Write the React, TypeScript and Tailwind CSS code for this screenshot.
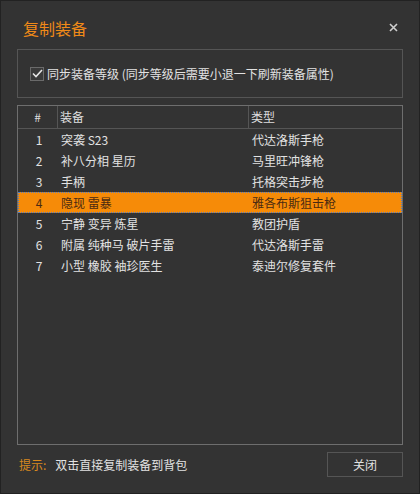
import React from 'react';

const rows = [
  { id: 1, name: '突袭 S23', type: '代达洛斯手枪' },
  { id: 2, name: '补八分相 星历', type: '马里旺冲锋枪' },
  { id: 3, name: '手柄', type: '托格突击步枪' },
  { id: 4, name: '隐现 雷暴', type: '雅各布斯狙击枪' },
  { id: 5, name: '宁静 变异 炼星', type: '教团护盾' },
  { id: 6, name: '附属 纯种马 破片手雷', type: '代达洛斯手雷' },
  { id: 7, name: '小型 橡胶 袖珍医生', type: '泰迪尔修复套件' },
];

const selected = 4;

export default function App() {
  return (
    <div
      className="w-[420px] h-[494px] bg-[#333333] border border-[#222222] flex flex-col px-[16px] text-[12px] text-[#e2e2e2]"
      style={{ fontFamily: '"Noto Sans CJK SC", "Noto Sans", sans-serif' }}
    >
      <div className="h-[48px] flex items-start justify-between shrink-0">
        <span className="mt-[17px] ml-[6px] text-[16px] leading-[20px] text-[#f08a18]">复制装备</span>
        <svg className="mt-[22px] mr-[5px]" width="9" height="9" viewBox="0 0 9 9">
          <path d="M1 1L8 8M8 1L1 8" stroke="#cfcfcf" strokeWidth="1.6" />
        </svg>
      </div>

      <div className="h-[49px] border border-[#555555] flex items-center pl-[12px] shrink-0">
        <div className="w-[14px] h-[14px] border border-[#6a6a6a] bg-[#3a3a3a] flex items-center justify-center">
          <svg width="11" height="9" viewBox="0 0 11 9">
            <path d="M1 4.5L4 7.5L10 1" stroke="#e6e6e6" strokeWidth="1.6" fill="none" />
          </svg>
        </div>
        <span className="ml-[3px] leading-[16px]">同步装备等级 (同步等级后需要小退一下刷新装备属性)</span>
      </div>

      <div className="mt-[7px] h-[340px] border border-[#6e6e6e] flex flex-col shrink-0">
        <div className="h-[23px] flex border-b border-[#555555] text-[#dedede]">
          <div className="w-[40px] border-r border-[#555555] flex items-center justify-center">#</div>
          <div className="w-[191px] border-r border-[#555555] flex items-center pl-[2px]">装备</div>
          <div className="flex-1 flex items-center pl-[2px]">类型</div>
        </div>
        {rows.map((r) => {
          const on = r.id === selected;
          return (
            <div
              key={r.id}
              className={
                on
                  ? 'h-[21px] flex items-center bg-[#f68b08] text-[#4a2a12] border border-dotted border-[#4d7ec8]'
                  : 'h-[21px] flex items-center border border-transparent'
              }
            >
              <div className="w-[40px] text-center">{r.id}</div>
              <div className="w-[191px] pl-[2px]">{r.name}</div>
              <div className="flex-1 pl-[2px]">{r.type}</div>
            </div>
          );
        })}
      </div>

      <div className="mt-[7px] flex items-center justify-between">
        <div className="flex items-center ml-[2px]">
          <span className="text-[#d8891e]">提示:</span>
          <span className="ml-[9px]">双击直接复制装备到背包</span>
        </div>
        <div className="w-[76px] h-[25px] border border-[#555555] flex items-center justify-center">关闭</div>
      </div>
    </div>
  );
}
